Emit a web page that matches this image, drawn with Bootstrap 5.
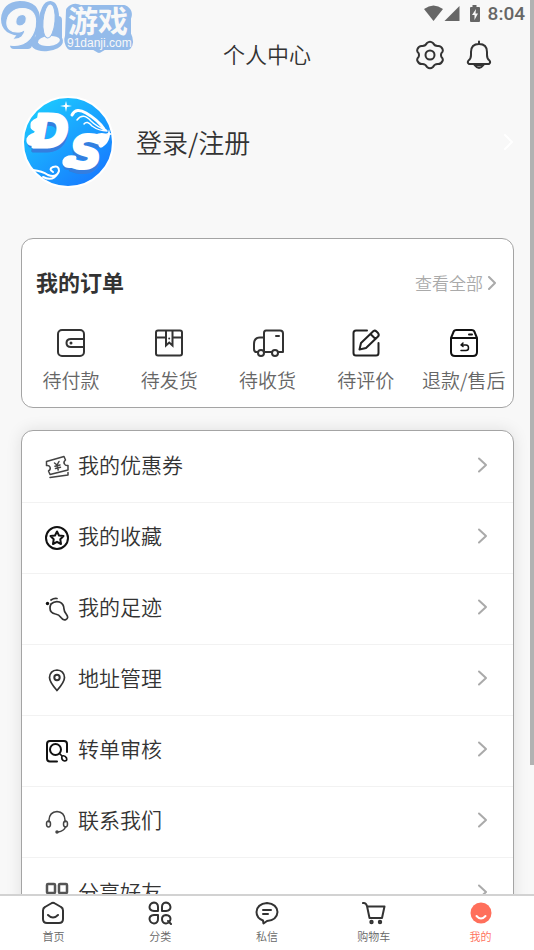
<!DOCTYPE html>
<html lang="zh-CN">
<head>
<meta charset="utf-8">
<meta name="viewport" content="width=device-width, initial-scale=1">
<title>个人中心</title>
<link href="https://cdn.jsdelivr.net/npm/bootstrap@5.3.0/dist/css/bootstrap.min.css" rel="stylesheet">
<style>
  body { background: #f8f8f8; color: #333; font-family: "Noto Sans CJK SC", sans-serif; font-weight: 350; }
  svg { display: block; flex: none; fill: none; stroke: #333; stroke-width: 2; stroke-linecap: round; stroke-linejoin: round; }
  a, a:hover { color: inherit; text-decoration: none; }
  .status-bar { height: 27px; padding-right: 9px; gap: 8px; font: 500 19px/27px Roboto, sans-serif; color: #666; }
  .status-bar svg { fill: #666; stroke: none; }
  .title-bar { display: grid; grid-template-columns: 1fr auto 1fr; height: 56px; padding: 0 40px; }
  .title-bar h1 { font-size: 22px; line-height: 32px; font-weight: 350; padding-bottom: 4px; }
  .title-actions { gap: 19px; }
  .icon-btn { padding: 0; border: 0; background: none; }
  .page-body { padding: 13px 20px 24px 21px; }
  .profile { gap: 22px; margin-bottom: 50px; padding-left: 1px; font-size: 26px; line-height: 36px; }
  .panel { background: #fff; border: 1px solid #a4a4a4; border-radius: 12px; }
  .orders { margin-bottom: 22px; padding: 28px 0 16px; }
  .orders-head { padding: 0 16px 0 14px; margin-bottom: 29px; line-height: 32px; }
  .orders-head h2 { font-size: 22px; line-height: 28px; font-weight: 700; padding-bottom: 4px; }
  .orders-head a { font-size: 17px; color: #aaa; gap: 4px; }
  .order-item { gap: 11px; font-size: 19px; line-height: 22px; color: #666; white-space: nowrap; }
  .menu-panel { padding-top: 1px; box-shadow: 0 0 16px rgba(0,0,0,.1); }
  .menu-row { height: 71px; padding: 0 25px 4px 23px; gap: 9px; font-size: 21px; border-bottom: 1px solid #f2f2f2; }
  .menu-row:last-child { border-bottom: 0; }
  .menu-row svg:first-child { margin-top: 4px; }
  .chev { stroke: #aaa; }
  .scroll-area { scrollbar-width: none; }
  .scroll-area::-webkit-scrollbar { display: none; }
  .tab-bar { background: #fff; border-top: 2px solid #d2d2d2; height: 56px; z-index: 2; }
  .tab-bar a { font-size: 11px; line-height: 16px; color: #666; gap: 3px; padding-top: 5px; }
  .tab-bar a.current { color: #ff6f5b; }
  .scroll-thumb { top: 0; right: 0; width: 4px; height: 80.5%; background: #b2b2b2; z-index: 3; }
  .watermark { top: 0; left: 0; z-index: 4; pointer-events: none; }
</style>
<script src="https://cdn.jsdelivr.net/npm/bootstrap@5.3.0/dist/js/bootstrap.bundle.min.js"></script>
</head>
<body class="vh-100 d-flex flex-column position-relative overflow-hidden">

<svg class="watermark position-absolute" width="136" height="56" viewBox="0 0 136 56">
  <g stroke="#94bbea" fill="#94bbea" stroke-width="8">
    <path d="M69 10Q74 5 80 8H124Q131 11 128 18V34Q132 42 128 47H104L99 50L94 47H70Q66 42 68 36Z" stroke-width="6"/>
    <ellipse cx="49" cy="20" rx="6" ry="15" transform="rotate(5 49 20)"/>
    <path d="M14 45L24 32Q5 32 5 19Q6 6 20 5Q36 5 36 20L28 45Z"/>
    <ellipse cx="47" cy="42" rx="12" ry="5" transform="rotate(-6 47 42)"/>
    <path d="M36 20L40 38M44 20V40M58 20V40"/>
  </g>
  <g fill="#f8f8f8" stroke="none">
    <text x="3" y="45" font-family="DejaVu Sans, sans-serif" font-size="50" font-weight="700" font-style="italic" stroke="#f8f8f8" stroke-width="1">9</text>
    <ellipse cx="49" cy="41" rx="11" ry="5" transform="rotate(-6 49 41)"/>
    <ellipse cx="49" cy="21" rx="6" ry="17" transform="rotate(5 49 21)" stroke="#94bbea" stroke-width="1"/>
    <text x="68" y="32" font-family="Noto Sans CJK SC, sans-serif" font-size="30" font-weight="700">游戏</text>
    <text x="67" y="47" font-family="Liberation Sans, sans-serif" font-size="12" font-weight="400">91danji.com</text>
  </g>
</svg>

<main class="scroll-area flex-grow-1 overflow-auto">
  <div class="status-bar d-flex align-items-center justify-content-end">
    <svg width="38" height="17" viewBox="0 0 38 17"><path d="M2 4Q11.500 -3 21 4L11.500 16Z"/><path d="M37.500 1v15H22.500Z"/></svg>
    <svg width="12" height="18" viewBox="0 0 12 18"><path d="M4.500 0h4v2H11q1 0 1 1v13q0 1-1 1H3q-1 0-1-1V3q0-1 1-1h1.500Z"/><path d="M8 4L4 10h2.500V15L10 8.500H7.500Z" fill="#f8f8f8"/></svg>
    <span>8:04</span>
  </div>
  <header class="title-bar align-items-center">
    <span></span>
    <h1 class="m-0">个人中心</h1>
    <div class="title-actions d-flex justify-content-end">
      <button class="icon-btn" type="button" aria-label="设置">
        <svg width="30" height="30" viewBox="0 0 30 30"><path d="M12 3Q15 .5 18 3Q19.500 6 22.500 6Q26 5.500 27.500 9Q28.500 11.500 26.500 13Q25.500 15 26.500 17Q28.500 19 27.500 21Q26 24.500 22.500 24Q19.500 24 18 27Q15 29.500 12 27Q10.500 24 7.500 24Q4 24.500 2.500 21Q1.500 19 3.500 17Q4.500 15 3.500 13Q1.500 11.500 2.500 9Q4 5.500 7.500 6Q10.500 6 12 3Z"/><circle cx="15" cy="15" r="4.500"/></svg>
      </button>
      <button class="icon-btn" type="button" aria-label="通知">
        <svg width="30" height="30" viewBox="0 0 30 30"><path d="M15 1.500V4M7 15V12Q7 4 15 4Q23 4 23 12V15Q23 19 25.500 20.500Q27 22.500 25 24H5Q3 22.500 4.500 20.500Q7 19 7 15Z"/><path d="M10.500 25Q15 31 19.500 25Z" fill="#999"/></svg>
      </button>
    </div>
  </header>

  <div class="page-body">
    <a href="#login" class="profile d-flex align-items-center">
      <svg width="92" height="92" viewBox="0 0 92 92" role="img" aria-label="DS">
        <defs><linearGradient id="avatarFill" x1=".1" y1=".1" x2=".75" y2=".9"><stop stop-color="#1dcaff"/><stop offset="1" stop-color="#1780ff"/></linearGradient></defs>
        <circle cx="46" cy="46" r="45" fill="url(#avatarFill)" stroke="#fff" stroke-width="2"/>
        <g font-family="DejaVu Sans, sans-serif" font-weight="700" font-style="italic" font-size="44" stroke-width="3">
          <g fill="#347edf" stroke="#347edf"><text x="10" y="55">D</text><text x="48" y="76">S</text><path d="M14 51Q5 51 8 46M50 72Q41 74 43 68"/></g>
          <g fill="#fff" stroke="#fff"><text x="10" y="51">D</text><text x="48" y="72">S</text><path d="M14 47Q6 49 7 43Q9 39 18 38M16 24Q10 26 11 31Q13 34 20 32M51 69Q42 71 43 65Q45 61 52 62M74 41Q80 38 85 41Q84 46 79 49" stroke-width="5"/></g>
        </g>
        <g stroke="#fff" stroke-width="2">
          <path d="M50 19Q54 11 64 17Q76 24 82 33" stroke-width="3"/><path d="M55 24Q61 16 69 25Q75 31 84 34M62 28Q65 24 70 30Q77 35 85 35" stroke-width="1.500"/>
          <path d="M11 74Q20 75 26 79Q35 82 37 75Q37 69 31 71Q26 73 31 76M21 81Q31 86 36 77"/>
        </g>
        <path d="M44 5L45 9L50 10L45 11L44 16L43 11L38 10L43 9ZM87 33L88 37L91 38L88 39L87 42L86 39L83 38L86 37Z" fill="#fff" stroke="none"/>
      </svg>
      <span class="flex-grow-1">登录/注册</span>
      <svg width="10" height="16" viewBox="0 0 10 16"><path d="M1 1l7 7-7 7" stroke="#fff"/></svg>
    </a>

    <section class="panel orders">
      <div class="orders-head d-flex align-items-center justify-content-between">
        <h2 class="m-0">我的订单</h2>
        <a href="#orders" class="d-flex align-items-center">查看全部
          <svg class="chev" width="10" height="14" viewBox="0 0 10 14"><path d="M2 1l6 6-6 6"/></svg>
        </a>
      </div>
      <div class="row row-cols-5 g-0">
        <a href="#pay" class="order-item d-flex flex-column align-items-center">
          <svg width="30" height="30" viewBox="0 0 30 30"><rect x="2" y="2" width="26" height="26" rx="4"/><path d="M28 11H15Q10.500 11 10.500 15Q10.500 19 15 19H28"/><circle cx="15" cy="15" r="1.500" fill="#333" stroke="none"/></svg>待付款</a>
        <a href="#ship" class="order-item d-flex flex-column align-items-center">
          <svg width="30" height="30" viewBox="0 0 30 30"><rect x="2" y="2.500" width="26" height="25" rx="2"/><path d="M2 9.500H12M18.500 9.500H28M12 3V17.500L15.200 14.500L18.500 17.500V3" stroke-linejoin="miter"/><circle cx="15.200" cy="10.500" r="1" fill="#333" stroke="none"/></svg>待发货</a>
        <a href="#receive" class="order-item d-flex flex-column align-items-center">
          <svg width="34" height="30" viewBox="0 0 34 30"><path d="M8 24H6.500Q4 24 4 21V16Q4 9.500 10 9.500H13M14 24V5Q14 2.500 16 2.500H30Q33 2.500 33 5.500V24H28.500M14 24H21.500M26 8h3"/><circle cx="11" cy="25" r="3"/><circle cx="25" cy="25" r="3"/></svg>待收货</a>
        <a href="#review" class="order-item d-flex flex-column align-items-center">
          <svg width="30" height="30" viewBox="0 0 30 30"><path d="M16 2.500H5Q2.500 2.500 2.500 5V25Q2.500 27.500 5 27.500H25Q27.500 27.500 27.500 25V15M10 15L22.500 3Q24 2 25.500 3.500L27 5Q28.500 7 27 8.500L15 20L8.500 21.500ZM20 6.500L24.500 11" stroke="#222"/></svg>待评价</a>
        <a href="#refund" class="order-item d-flex flex-column align-items-center">
          <svg width="30" height="30" viewBox="0 0 30 30"><g stroke="#111"><path d="M2 10L4.500 4Q5 2 7.500 2H22.500Q25 2 25.500 4L28 10V24Q28 28 24 28H6Q2 28 2 24ZM2 10H28M20 6.500H23"/><path d="M12 17H17Q19.500 17 19.500 20Q19.500 22.500 17 22.500H12M14 15L12 17L14 18.500" stroke-width="1.500"/></g></svg>退款/售后</a>
      </div>
    </section>

    <nav class="panel menu-panel" aria-label="功能">
      <a href="#coupon" class="menu-row d-flex align-items-center">
        <svg width="24" height="24" viewBox="0 0 24 24"><g stroke-width="1.500" stroke="#444"><path d="M1.500 6.500L19 1.500L20.500 5Q18 7 19.500 9Q20.500 11 23 10.500V15L5 19.500L3.500 16Q6 14.500 5 12Q4 10 1.500 10.500ZM5 22.500L23 20V17.500"/><path d="M9.500 8l2.500 2 2-3.500M10 11.200l5-1.200M10.500 13.500l5-1.200M12.200 10.500l1 4.500"/></g></svg>
        <span class="flex-grow-1">我的优惠券</span><svg class="chev" width="12" height="16" viewBox="0 0 12 16"><path d="M3 1.500l7 6.500-7 6.500"/></svg></a>
      <a href="#favorites" class="menu-row d-flex align-items-center">
        <svg width="24" height="24" viewBox="0 0 24 24"><g stroke="#111"><circle cx="12" cy="12" r="11"/><path d="M12 5.500L14 9.500L18.500 10L15.300 13.300L16 18L12 15.800L8 18L8.700 13.300L5.500 10L10 9.500Z"/></g></svg>
        <span class="flex-grow-1">我的收藏</span><svg class="chev" width="12" height="16" viewBox="0 0 12 16"><path d="M3 1.500l7 6.500-7 6.500"/></svg></a>
      <a href="#history" class="menu-row d-flex align-items-center">
        <svg width="24" height="24" viewBox="0 0 24 24"><path d="M6 7Q10 3.500 14.500 5Q19 7 19 12Q19 14.500 21.500 17.500Q24 21 21 22.500Q18.500 24 16 20.500Q14 17.500 10.500 17Q5 16 5 11Q5 9 6 7ZM6 3Q9 1 12 1.500" stroke-width="1.700"/><circle cx="2.500" cy="6.500" r="1.700" fill="#111" stroke="none"/></svg>
        <span class="flex-grow-1">我的足迹</span><svg class="chev" width="12" height="16" viewBox="0 0 12 16"><path d="M3 1.500l7 6.500-7 6.500"/></svg></a>
      <a href="#address" class="menu-row d-flex align-items-center">
        <svg width="24" height="24" viewBox="0 0 24 24"><path d="M12 22.500Q4.500 14 4.500 9.500Q5 2.500 12 2Q19 2.500 19.500 9.500Q19.500 14 12 22.500Z" stroke-width="1.700"/><circle cx="12" cy="9.500" r="2.700"/></svg>
        <span class="flex-grow-1">地址管理</span><svg class="chev" width="12" height="16" viewBox="0 0 12 16"><path d="M3 1.500l7 6.500-7 6.500"/></svg></a>
      <a href="#audit" class="menu-row d-flex align-items-center">
        <svg width="24" height="24" viewBox="0 0 24 24"><g stroke="#111"><path d="M12 22.500H5Q2 22.500 2 19.500V5Q2 2 5 2H19Q22 2 22 5V13"/><circle cx="10.500" cy="10.500" r="5.500"/><path d="M14.500 14.500L17 17Q20 16 21.500 19Q22.500 22 19.500 22Q16 21 17 17" stroke-width="1.700"/></g></svg>
        <span class="flex-grow-1">转单审核</span><svg class="chev" width="12" height="16" viewBox="0 0 12 16"><path d="M3 1.500l7 6.500-7 6.500"/></svg></a>
      <a href="#contact" class="menu-row d-flex align-items-center">
        <svg width="24" height="24" viewBox="0 0 24 24"><g stroke="#444" stroke-width="1.500"><path d="M4 12V10Q4.500 2 12 1.500Q19.500 2 20 10V12M20.500 17Q19 21 13 22"/><ellipse cx="3.500" cy="14" rx="2" ry="3"/><ellipse cx="20.500" cy="14" rx="2" ry="3"/><circle cx="12" cy="22" r="1" fill="#444"/></g></svg>
        <span class="flex-grow-1">联系我们</span><svg class="chev" width="12" height="16" viewBox="0 0 12 16"><path d="M3 1.500l7 6.500-7 6.500"/></svg></a>
      <a href="#share" class="menu-row d-flex align-items-center">
        <svg width="24" height="24" viewBox="0 0 24 24"><g stroke="#555" stroke-width="2.500"><rect x="2" y="2" width="8" height="9" rx="1"/><rect x="14" y="2" width="8" height="9" rx="1"/><rect x="2" y="14" width="8" height="8" rx="1"/><rect x="14" y="14" width="8" height="8" rx="1"/></g></svg>
        <span class="flex-grow-1">分享好友</span><svg class="chev" width="12" height="16" viewBox="0 0 12 16"><path d="M3 1.500l7 6.500-7 6.500"/></svg></a>
    </nav>
  </div>
</main>

<div class="scroll-thumb position-absolute"></div>

<nav class="tab-bar d-flex flex-shrink-0" aria-label="主导航">
  <a href="#home" class="flex-fill w-100 d-flex flex-column align-items-center">
    <svg width="24" height="24" viewBox="0 0 24 24"><path d="M10 2.500Q12 1 14 2.500L20 6Q22 7 22 9.500V18Q22 22 18 22H6Q2 22 2 18V9.500Q2 7 4 6ZM7 14Q12 19 17 14"/></svg>首页</a>
  <a href="#category" class="flex-fill w-100 d-flex flex-column align-items-center">
    <svg width="24" height="24" viewBox="0 0 24 24"><path d="M10 10H6Q1.500 9.500 1.500 6Q2 2 6 1.500Q10 2 10 6ZM14 10H18Q22.500 9.500 22.500 6Q22 2 18 1.500Q14 2 14 6ZM10 14H6Q1.500 14.500 1.500 18Q2 22 6 22.500Q10 22 10 18Z"/><path d="M18 14Q22.500 14.500 22.500 18Q22 22 18 22.500Q14 22 14 18Q14 14.500 18 14ZM20 20L23 23"/></svg>分类</a>
  <a href="#messages" class="flex-fill w-100 d-flex flex-column align-items-center">
    <svg width="24" height="24" viewBox="0 0 24 24"><path d="M8 19.500Q1.500 17 1.500 11Q2 3 12 2Q22 3 22.500 11Q22 19 12 20L8.500 22.500ZM8 9H16M8 13H13"/></svg>私信</a>
  <a href="#cart" class="flex-fill w-100 d-flex flex-column align-items-center">
    <svg width="24" height="24" viewBox="0 0 24 24"><path d="M1 2Q4 1.500 5 5L7.500 17H20L22.500 5.500H5"/><circle cx="9.500" cy="21" r="1.200"/><circle cx="18" cy="21" r="1.200"/></svg>购物车</a>
  <a href="#mine" class="current flex-fill w-100 d-flex flex-column align-items-center" aria-current="page">
    <svg width="24" height="24" viewBox="0 0 24 24"><circle cx="12" cy="12" r="10.500" fill="#ff6f5b" stroke="none"/><path d="M7.500 15Q12 20 16.500 15" stroke="#fff"/></svg>我的</a>
</nav>
</body>
</html>
